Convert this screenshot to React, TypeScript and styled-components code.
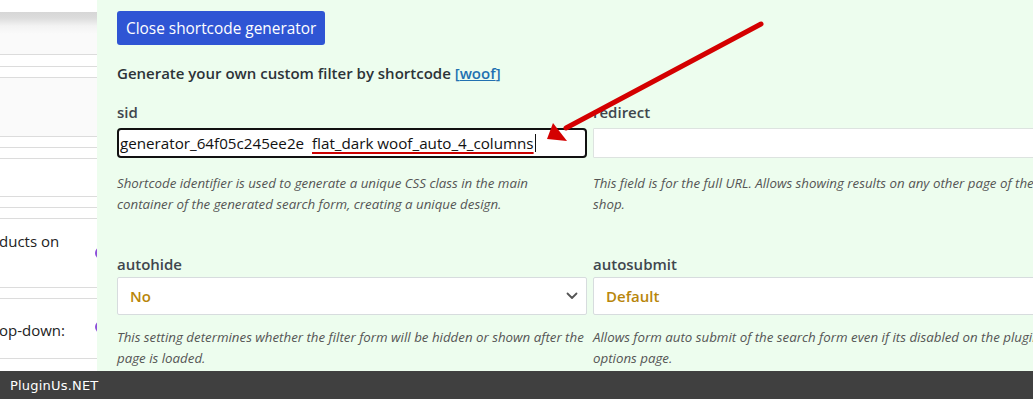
import React from 'react'
import styled, { createGlobalStyle } from 'styled-components'

const GlobalStyle = createGlobalStyle`
  html, body {
    margin: 0;
    padding: 0;
    width: 1033px;
    height: 399px;
    overflow: hidden;
    background: #fff;
  }
  * { box-sizing: border-box; }
`

const Page = styled.div`
  position: relative;
  display: flex;
  width: 1033px;
  height: 399px;
  overflow: hidden;
  font-family: 'Open Sans', 'Noto Sans', sans-serif;
`

const Sidebar = styled.div`
  flex: 0 0 97px;
  display: flex;
  flex-direction: column;
  overflow: hidden;
  background: #fff;
`

const SideHeader = styled.div`
  margin-top: 12px;
  height: 43px;
  background: linear-gradient(#d6d6d6 0, #dcdcdc 6px, #f3f3f3 14px, #fafafa 22px, #fafafa 100%);
  border-bottom: 1px solid #dcdcdc;
`

const SideRow = styled.div<{ h: number; shade?: boolean }>`
  height: ${({ h }) => h}px;
  flex: 0 0 auto;
  display: flex;
  align-items: center;
  justify-content: space-between;
  border-bottom: 1px solid #dcdcdc;
  background: ${({ shade }) => (shade ? '#fafafa' : '#fff')};
  font-family: 'Open Sans', sans-serif;
  font-size: 15px;
  color: #222;
  white-space: nowrap;
`

const SideLabel = styled.span<{ dy: number }>`
  margin-left: -1px;
  transform: translateY(${({ dy }) => dy}px);
`

const Knob = styled.span<{ dy: number }>`
  width: 12px;
  height: 12px;
  border-radius: 50%;
  background: #8d4fd9;
  margin-right: -10px;
  transform: translateY(${({ dy }) => dy}px);
`

const Panel = styled.div`
  flex: 1;
  background: #edfdee;
  padding: 11px 0 0 20px;
  color: #333;
`

const CloseButton = styled.button`
  display: block;
  height: 34px;
  padding: 0 9px;
  border: none;
  border-radius: 3px;
  background: #2f55d4;
  color: #fff;
  font-family: 'Open Sans', sans-serif;
  font-size: 15.4px;
  font-weight: 500;
  cursor: pointer;
`

const Intro = styled.p`
  margin: 18px 0 0;
  font-size: 15px;
  font-weight: 600;
  color: #2c3338;
  a {
    color: #2271b1;
    text-decoration: underline;
  }
  span { color: #2271b1; }
`

const Grid = styled.div`
  display: grid;
  grid-template-columns: 470px 470px;
  column-gap: 6px;
  row-gap: 0;
  margin-top: 19px;
`

const Field = styled.div<{ gapTop?: number }>`
  display: flex;
  flex-direction: column;
  margin-top: ${({ gapTop }) => gapTop ?? 0}px;
`

const FieldLabel = styled.label<{ tight?: boolean }>`
  font-size: 15px;
  font-weight: 600;
  color: #40464d;
  line-height: 20px;
  margin-bottom: ${({ tight }) => (tight ? 3 : 5)}px;
`

const TextInput = styled.div<{ active?: boolean }>`
  position: relative;
  height: 30px;
  margin-top: 1px;
  border: ${({ active }) => (active ? '2px solid #111' : '1px solid #dde3e0')};
  border-radius: ${({ active }) => (active ? '4px' : '1px')};
  background: #fff;
  display: flex;
  align-items: center;
  padding-left: 1px;
  font-family: 'Open Sans', sans-serif;
  font-size: 15.2px;
  color: #111;
  white-space: pre;
`

const Misspelled = styled.span`
  text-decoration: underline;
  text-decoration-color: #c00;
  text-decoration-thickness: 2px;
  text-underline-offset: 3px;
`

const Caret = styled.span`
  display: inline-block;
  width: 1px;
  height: 18px;
  background: #111;
  margin-left: 1px;
`

const Select = styled.div`
  height: 38px;
  border: 1px solid #d7dcde;
  border-radius: 2px;
  background: #fff;
  display: flex;
  align-items: center;
  justify-content: space-between;
  padding: 0 8px 0 12px;
  font-size: 15px;
  font-weight: 600;
  color: #b8860b;
`

const Hint = styled.p<{ gap?: number }>`
  margin: ${({ gap }) => gap ?? 15}px 0 0;
  font-style: italic;
  font-size: 13.3px;
  line-height: 20.5px;
  color: #555;
`

const Footer = styled.div`
  position: absolute;
  left: 0;
  right: 0;
  bottom: 0;
  height: 28px;
  background: #404040;
  color: #fff;
  display: flex;
  align-items: center;
  padding-left: 10px;
  font-family: 'DejaVu Sans', sans-serif;
  font-size: 13px;
  letter-spacing: 0.2px;
`

const Annotation = styled.svg`
  position: absolute;
  left: 0;
  top: 0;
  pointer-events: none;
`

function Chevron() {
  return (
    <svg width="12" height="8" viewBox="0 0 12 8">
      <path d="M1.5 1.5 L6 6 L10.5 1.5" fill="none" stroke="#555" strokeWidth="1.8" strokeLinecap="round" strokeLinejoin="round" />
    </svg>
  )
}

export default function App() {
  return (
    <>
      <GlobalStyle />
      <Page>
        <Sidebar>
          <SideHeader />
          <SideRow h={12} />
          <SideRow h={11} />
          <SideRow h={59} shade />
          <SideRow h={11} />
          <SideRow h={11} />
          <SideRow h={38} />
          <SideRow h={11} />
          <SideRow h={11} />
          <SideRow h={69}>
            <SideLabel dy={-12}>ducts on</SideLabel>
            <Knob dy={0} />
          </SideRow>
          <SideRow h={11} />
          <SideRow h={60}>
            <SideLabel dy={1}>op-down:</SideLabel>
            <Knob dy={-2} />
          </SideRow>
        </Sidebar>

        <Panel>
          <CloseButton>Close shortcode generator</CloseButton>
          <Intro>
            Generate your own custom filter by shortcode <span>[</span><a>woof</a><span>]</span>
          </Intro>

          <Grid>
            <Field>
              <FieldLabel>sid</FieldLabel>
              <TextInput active>
                generator_64f05c245ee2e{'  '}
                <Misspelled>flat_dark woof_auto_4_columns</Misspelled>
                <Caret />
              </TextInput>
              <Hint>
                Shortcode identifier is used to generate a unique CSS class in the main container of the
                generated search form, creating a unique design.
              </Hint>
            </Field>
            <Field>
              <FieldLabel>redirect</FieldLabel>
              <TextInput />
              <Hint>
                This field is for the full URL. Allows showing results on any other page of the shop.
              </Hint>
            </Field>

            <Field gapTop={40}>
              <FieldLabel tight>autohide</FieldLabel>
              <Select>
                No
                <Chevron />
              </Select>
              <Hint gap={12}>
                This setting determines whether the filter form will be hidden or shown after the page is
                loaded.
              </Hint>
            </Field>
            <Field gapTop={40}>
              <FieldLabel tight>autosubmit</FieldLabel>
              <Select>Default</Select>
              <Hint gap={12}>
                Allows form auto submit of the search form even if its disabled on the plugin options page.
              </Hint>
            </Field>
          </Grid>
        </Panel>

        <Annotation width="1033" height="399" viewBox="0 0 1033 399">
          <line x1="761" y1="24" x2="566" y2="128" stroke="#d40000" strokeWidth="5" strokeLinecap="round" />
          <polygon points="547,139 553,123 567,141" fill="#d40000" />
        </Annotation>

        <Footer>PluginUs.NET</Footer>
      </Page>
    </>
  )
}
